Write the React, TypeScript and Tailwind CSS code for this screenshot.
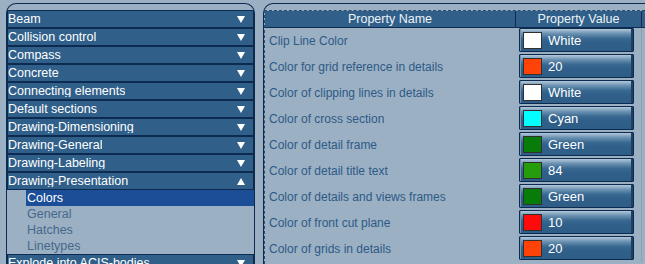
import React from 'react';

const categories = [
  'Beam',
  'Collision control',
  'Compass',
  'Concrete',
  'Connecting elements',
  'Default sections',
  'Drawing-Dimensioning',
  'Drawing-General',
  'Drawing-Labeling',
];

const subItems = ['Colors', 'General', 'Hatches', 'Linetypes'];

const properties = [
  { name: 'Clip Line Color', value: 'White', swatch: 'bg-[#ffffff]' },
  { name: 'Color for grid reference in details', value: '20', swatch: 'bg-[#ff4208]' },
  { name: 'Color of clipping lines in details', value: 'White', swatch: 'bg-[#ffffff]' },
  { name: 'Color of cross section', value: 'Cyan', swatch: 'bg-[#00ffff]' },
  { name: 'Color of detail frame', value: 'Green', swatch: 'bg-[#087c08]' },
  { name: 'Color of detail title text', value: '84', swatch: 'bg-[#249c0c]' },
  { name: 'Color of details and views frames', value: 'Green', swatch: 'bg-[#087c08]' },
  { name: 'Color of front cut plane', value: '10', swatch: 'bg-[#ff0a0a]' },
  { name: 'Color of grids in details', value: '20', swatch: 'bg-[#ff4208]' },
];

const Arrow = ({ up = false }: { up?: boolean }) => (
  <svg width="8" height="7" viewBox="0 0 8 7" className="mr-[8px] shrink-0">
    {up ? <polygon points="4,0 8,7 0,7" fill="#ffffff" /> : <polygon points="0,0 8,0 4,7" fill="#ffffff" />}
  </svg>
);

const CategoryRow = ({ label, up }: { label: string; up?: boolean }) => (
  <div className="h-[18px] shrink-0 border border-[#0d2b50] bg-[#30608a] flex items-center justify-between text-white text-[12.5px] leading-none">
    <span className="truncate">{label}</span>
    <Arrow up={up} />
  </div>
);

export default function App() {
  return (
    <div
      className="w-[645px] h-[264px] overflow-hidden bg-[#9cb0c4] flex pt-[3px]"
      style={{ fontFamily: '"Liberation Sans", Arial, sans-serif' }}
    >
      {/* Category tree */}
      <div className="ml-[6px] w-[249px] shrink-0 border border-b-0 border-[#0d2b50] rounded-t-[10px] pt-[6px] flex flex-col">
        {categories.map((c) => (
          <CategoryRow key={c} label={c} />
        ))}
        <CategoryRow label="Drawing-Presentation" up />
        <div className="flex flex-col shrink-0">
          {subItems.map((s, i) => (
            <div
              key={s}
              className={`ml-[19px] h-[16px] shrink-0 pl-px flex items-center text-[12.5px] leading-none ${
                i === 0 ? 'bg-[#1c4e98] text-white' : 'text-[#46688a]'
              }`}
            >
              {s}
            </div>
          ))}
        </div>
        <CategoryRow label="Explode into ACIS-bodies" />
      </div>

      {/* Property grid */}
      <div className="ml-[8px] flex-1 border border-r-0 border-b-0 border-[#0d2b50] rounded-tl-[10px] pt-[6px] flex flex-col min-w-0">
        <div className="flex flex-col border-l border-t border-dashed border-[#2a4a6e] flex-1">
          <div className="flex h-[17px] shrink-0 bg-[#30608a] text-[#eef3f8] text-[12.5px] leading-none border-b border-[#0d2b50]">
            <div className="w-[251px] shrink-0 flex items-center justify-center border-r border-[#0d2b50]">
              Property Name
            </div>
            <div className="w-[126px] shrink-0 flex items-center justify-center border-r border-[#0d2b50]">
              Property Value
            </div>
          </div>
          {properties.map((p) => (
            <div key={p.name} className="flex h-[26px] shrink-0">
              <div className="w-[251px] shrink-0 pl-[4px] flex items-center text-[12px] text-[#2c5a86] leading-none">
                {p.name}
              </div>
              <div className="w-[126px] shrink-0 pl-[3px] border-r border-[#8aa1b7]">
                <div className="w-[115px] h-[24px] border border-[#0d2b50] rounded-[1px] bg-[linear-gradient(to_bottom,#b4c9da_0%,#6d93b3_20%,#3a6a92_42%,#30608a_60%,#2e5d86_100%)] shadow-[inset_-2px_0_0_#1d3f62,inset_1px_0_0_#6f93b1] flex items-center pl-[3px]">
                  <div className={`w-[19px] h-[17px] border border-[#303030] ${p.swatch}`} />
                  <span className="ml-[6px] text-white text-[13px] leading-none">{p.value}</span>
                </div>
              </div>
            </div>
          ))}
        </div>
      </div>
    </div>
  );
}
